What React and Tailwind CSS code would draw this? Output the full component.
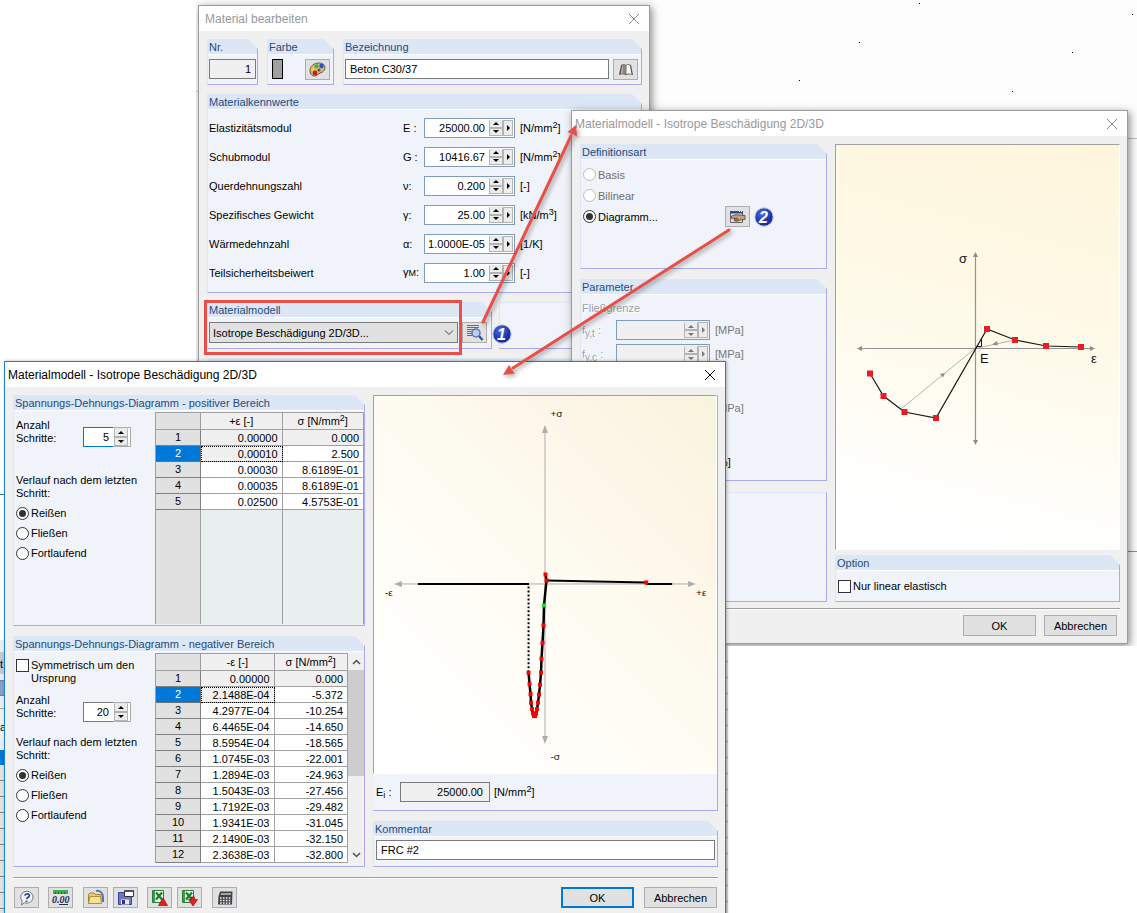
import React, { useId, useState } from "react";

const positiveRows = [
  ["0.00000", "0.000"],
  ["0.00010", "2.500"],
  ["0.00030", "8.6189E-01"],
  ["0.00035", "8.6189E-01"],
  ["0.02500", "4.5753E-01"],
];

const negativeRows = [
  ["0.00000", "0.000"],
  ["2.1488E-04", "-5.372"],
  ["4.2977E-04", "-10.254"],
  ["6.4465E-04", "-14.650"],
  ["8.5954E-04", "-18.565"],
  ["1.0745E-03", "-22.001"],
  ["1.2894E-03", "-24.963"],
  ["1.5043E-03", "-27.456"],
  ["1.7192E-03", "-29.482"],
  ["1.9341E-03", "-31.045"],
  ["2.1490E-03", "-32.150"],
  ["2.3638E-03", "-32.800"],
];

const Unit = ({ children, sup }) => (
  <span className="whitespace-nowrap">
    [{children}
    {sup && <sup className="text-[9px] leading-none -top-1">{sup}</sup>}]
  </span>
);

const materialValues = [
  { label: "Elastizitätsmodul", symbol: "E :", value: "25000.00", unit: <Unit sup="2">N/mm</Unit> },
  { label: "Schubmodul", symbol: "G :", value: "10416.67", unit: <Unit sup="2">N/mm</Unit> },
  { label: "Querdehnungszahl", symbol: "ν:", value: "0.200", unit: <Unit>-</Unit> },
  { label: "Spezifisches Gewicht", symbol: "γ:", value: "25.00", unit: <Unit sup="3">kN/m</Unit> },
  { label: "Wärmedehnzahl", symbol: "α:", value: "1.0000E-05", unit: <Unit>1/K</Unit> },
  {
    label: "Teilsicherheitsbeiwert",
    symbol: (
      <>
        γ<span className="text-[9px]">M</span>:
      </>
    ),
    value: "1.00",
    unit: <Unit>-</Unit>,
  },
];

const Window = ({ title, active, className, children }) => (
  <section
    className={
      "absolute flex flex-col border bg-[#f0f0f0] " +
      (active
        ? "border-[#1883d7] shadow-[1px_0_3px_rgba(0,0,0,0.3)] "
        : "border-[#9c9c9c] shadow-[2px_2px_8px_rgba(0,0,0,0.45)] ") +
      className
    }
  >
    <header className="flex h-[25px] shrink-0 items-center justify-between bg-white pl-[3px] pr-2">
      <h2 className={"text-xs whitespace-nowrap " + (active ? "text-black" : "text-[#999]")}>
        {title}
      </h2>
      <button type="button" aria-label="Schließen" className="p-px">
        <svg width="12" height="12" viewBox="0 0 12 12">
          <path d="M1 1 11 11M11 1 1 11" stroke={active ? "#000" : "#888"} fill="none" />
        </svg>
      </button>
    </header>
    {children}
  </section>
);

const Group = ({ title, className = "", children }) => (
  <section
    className={
      "flex min-w-0 flex-col border-l border-r border-b border-l-[#dce6f5] border-r-[#aaa9ec] border-b-[#aaa9ec] bg-[#f0f4fa] " +
      (title
        ? "[clip-path:polygon(0_0,calc(100%_-_10px)_0,100%_10px,100%_100%,0_100%)] "
        : "border-t border-t-[#dce6f5] ") +
      className
    }
  >
    {title && (
      <h3 className="h-4 shrink-0 border-b border-white bg-[#dce6f5] pl-px leading-[17px] text-[#1d4b7c] whitespace-nowrap">
        {title}
      </h3>
    )}
    {children}
  </section>
);

const Arrow = ({ dir }) => (
  <svg width="6" height="3" viewBox="0 0 6 3" className="block">
    <path d={dir === "up" ? "M0 3 3 0 6 3z" : "M0 0 3 3 6 0z"} fill="currentColor" />
  </svg>
);

const SpinButtons = () => (
  <span className="flex w-[14px] shrink-0 flex-col">
    <button
      type="button"
      aria-label="Mehr"
      className="flex flex-1 items-center justify-center border border-[#b4b4b4] border-t-[#e8e8e8] bg-[#ececec]"
    >
      <Arrow dir="up" />
    </button>
    <button
      type="button"
      aria-label="Weniger"
      className="flex flex-1 items-center justify-center border border-[#b4b4b4] bg-[#ececec]"
    >
      <Arrow dir="down" />
    </button>
  </span>
);

const ValueField = ({ id, value, disabled, className = "" }) => (
  <div
    className={
      "flex h-5 border border-[#7f9db9] p-px " +
      (disabled ? "bg-[#f0f0f0] text-[#777] " : "bg-white ") +
      className
    }
  >
    <input
      id={id}
      defaultValue={value}
      disabled={disabled}
      className="min-w-0 flex-1 bg-transparent pr-1 text-right outline-none"
    />
    <SpinButtons />
    <button
      type="button"
      aria-label="Auswahl"
      className="flex w-[10px] shrink-0 items-center justify-center border border-[#b4b4b4] bg-[#ececec]"
    >
      <svg width="3" height="6" viewBox="0 0 3 6">
        <path d="M0 0 3 3 0 6z" fill="currentColor" />
      </svg>
    </button>
  </div>
);

const IconButton = ({ label, className = "", children }) => (
  <button
    type="button"
    aria-label={label}
    className={
      "flex h-[21px] w-[25px] shrink-0 items-center justify-center border border-[#adadad] bg-[#e1e1e1] " +
      className
    }
  >
    {children}
  </button>
);

const PushButton = ({ primary, children }) => (
  <button
    type="button"
    className={
      "h-[21px] w-[73px] bg-[#e1e1e1] " +
      (primary ? "border-2 border-[#0078d7]" : "border border-[#adadad]")
    }
  >
    {children}
  </button>
);

const Radio = ({ name, label, checked, disabled, onChange }) => (
  <label className={"flex items-center gap-0.5 " + (disabled ? "text-[#6d6d6d]" : "")}>
    <span className="grid">
      <input
        type="radio"
        name={name}
        checked={checked}
        disabled={disabled}
        onChange={onChange}
        className="peer col-start-1 row-start-1 size-[13px] appearance-none rounded-full border border-[#333] bg-white disabled:border-[#bcbcbc]"
      />
      <span className="pointer-events-none col-start-1 row-start-1 hidden size-[7px] place-self-center rounded-full bg-[#333] peer-checked:block" />
    </span>
    {label}
  </label>
);

const Badge = ({ n }) => (
  <svg width="20" height="20" viewBox="0 0 20 20" className="shrink-0">
    <defs>
      <radialGradient id={"badge" + n} cx="0.4" cy="0.3" r="0.8">
        <stop offset="0" stopColor="#4a6fe0" />
        <stop offset="0.6" stopColor="#1c35ad" />
        <stop offset="1" stopColor="#14258a" />
      </radialGradient>
    </defs>
    <circle cx="10" cy="10" r="9.2" fill={"url(#badge" + n + ")"} stroke="#c6cbe2" />
    <text
      x="9.5"
      y="15.5"
      textAnchor="middle"
      fill="#fff"
      fontSize="16"
      fontWeight="bold"
      fontStyle="italic"
      fontFamily="Liberation Sans, sans-serif"
    >
      {n}
    </text>
  </svg>
);

/* icons */

const PaletteIcon = () => (
  <svg width="17" height="15" viewBox="0 0 17 15">
    <path
      d="M1 9C1 4 5 1 10 1c4 0 6 2 6 4.500 0 3-2 4.500-4.500 5.500S9 13 6 14C3 14 1 12 1 9z"
      fill="#cdb592"
      stroke="#6f5a44"
    />
    <circle cx="4" cy="7.500" r="2" fill="#efd51f" />
    <circle cx="7.500" cy="4.200" r="2" fill="#3cba2e" />
    <circle cx="12.500" cy="4" r="2.200" fill="#2a48d8" />
    <circle cx="6" cy="11" r="2.400" fill="#d11c1c" />
    <circle cx="10" cy="8" r="1.500" fill="#7d4a25" />
  </svg>
);

const BookIcon = () => (
  <svg width="16" height="14" viewBox="0 0 16 14">
    <path d="M1 12 3 2c2-1 4-1 5 0 1-1 3-1 5 0l2 10c-2-1-5-1-7 0-2-1-5-1-7 0z" fill="#4a4a52" />
    <path d="M2.500 11 4 2.500c1.500-.6 3-.6 3.600 0V11c-1.600-.8-3.500-.8-5.100 0z" fill="#b3a996" />
    <path d="M13.500 11 12 2.500c-1.500-.6-3-.6-3.600 0V11c1.600-.8 3.500-.8 5.100 0z" fill="#faf9f4" />
    <path d="M6 2v8.500" stroke="#6c6458" />
  </svg>
);

const DetailsIcon = () => (
  <svg width="18" height="17" viewBox="0 0 18 17">
    <path d="M1 1.500h12M1 3.500h12M1 5.500h7M1 7.500h5M1 9.500h5M1 11.500h6" stroke="#6a6a6a" />
    <circle cx="10" cy="9" r="4" fill="#b9cdf2" stroke="#5d76ad" strokeWidth="1.500" />
    <path d="m13 12 3.500 4" stroke="#3a57a5" strokeWidth="2.500" />
  </svg>
);

const EditIcon = () => (
  <svg width="17" height="14" viewBox="0 0 17 14">
    <path d="M1.500 1.500h12v11h-12z" fill="#d9dee8" stroke="#666" />
    <path d="M1 1h13v2.500H1z" fill="#2b4c94" />
    <path d="M10 1.500h1M12 1.500h1" stroke="#fff" />
    <path
      d="M2 6.500C4 5 8 4.500 10 5l6 .5v4l-5 .5c-2 1.500-4 1.500-6 .5l1-2-4-.5z"
      fill="#c9a080"
      stroke="#54402f"
      strokeWidth="0.800"
    />
    <path d="M5 8.500 9 8M6 10l4-.5" stroke="#54402f" strokeWidth="0.800" />
  </svg>
);

const HelpIcon = () => (
  <svg width="16" height="16" viewBox="0 0 16 16">
    <path d="M8 1.200a6.300 6 0 1 1-2.500 11.600L2.500 15l.6-4A6.200 6 0 0 1 8 1.200z" fill="#f2f5fa" stroke="#777" />
    <path d="M5.800 5.600C6.200 3.400 10.500 3.200 10.300 5.600 10.200 7.300 8 7.300 7.800 9.200M7.500 10.600v1.500" fill="none" stroke="#2b4a9a" strokeWidth="1.800" />
  </svg>
);

const UnitsIcon = () => (
  <svg width="19" height="17" viewBox="0 0 19 17">
    <path d="M2 1h15v4H2z" fill="#3fae4f" />
    <path d="M4.500 3v2M7.500 3v2M10.500 3v2M13.500 3v2" stroke="#17702a" />
    <text x="1" y="14" fontSize="10" fontStyle="italic" fontWeight="bold" fontFamily="Liberation Serif, serif" fill="#222c55">
      0.00
    </text>
    <path d="M8 15.500h9" stroke="#222c55" />
  </svg>
);

const FolderIcon = () => (
  <svg width="18" height="17" viewBox="0 0 18 17">
    <path d="M9 2c4-1 7 2 7 6v5" fill="none" stroke="#4f79b0" strokeWidth="2" />
    <path d="M1.500 5.500 3 4h4l1 1.500h6v9h-12.500z" fill="#e8cf76" stroke="#a3812b" />
    <path d="M1.500 14.500 3 7.500h10.500l1 7z" fill="#f7e08e" stroke="#b08f38" />
  </svg>
);

const SaveIcon = () => (
  <svg width="18" height="17" viewBox="0 0 18 17">
    <path d="M1.500 3.500h13v12h-13z" fill="#6d76c9" stroke="#3a4293" />
    <path d="M4 10.500h8v5H4z" fill="#e6e8f4" />
    <path d="M5 11h3v4H5z" fill="#30387c" />
    <path d="M7.500 1.500h9v6h-9z" fill="#fff" stroke="#333" />
    <path d="M7 1h10v2H7z" fill="#46526e" />
  </svg>
);

const ExcelIcon = ({ up }) => (
  <svg width="18" height="18" viewBox="0 0 18 18">
    <path d="M1.500 1.500h11v12h-11z" fill="#e4f1e2" stroke="#2a7d3c" />
    <path d="M2 2h2v11H2z" fill="#3b9950" />
    <path d="m5 3.500 6 7M11 3.500l-6 7" stroke="#1f7a35" strokeWidth="2.200" />
    {up ? (
      <path d="m12 9 4.500 7.500h-9z" fill="#e51f1f" stroke="#8e1010" strokeWidth="0.700" />
    ) : (
      <path d="m12 17 4.500-6.500h-3V8h-3v2.500h-3z" fill="#e51f1f" stroke="#8e1010" strokeWidth="0.700" />
    )}
  </svg>
);

const CalculatorIcon = () => (
  <svg width="16" height="14" viewBox="0 0 16 14">
    <path d="M3 .5h12.500l-.5 13H1L1.500 5z" fill="#3d4148" />
    <path d="M4 2h10v2H3.500z" fill="#9aa8a4" />
    <path d="M3 7h11M3 9.500h11M3 12h10.500" stroke="#e8e8e8" strokeWidth="1.300" strokeDasharray="1.700 1.200" />
  </svg>
);

/* diagrams */

const modelPoints = [
  [870, 373.5],
  [883.5, 396],
  [904.5, 412],
  [936, 418],
  [987, 329],
  [1015, 340],
  [1046, 346],
  [1081, 347],
];

const ModelDiagram = () => (
  <svg viewBox="836 145 283 404" className="h-auto w-full" fontFamily="Liberation Sans, sans-serif">
    <g stroke="#929292" fill="#8c8c8c">
      <path d="M860 348.500h231M975.500 256v185" strokeWidth="1.200" />
      <path
        stroke="none"
        d="m857 348.500 5-2.500v5zM1095 348.500l-5-2.500v5zM975.500 252l-2.500 5h5zM975.500 445l-2.500-5h5z"
      />
      <path d="M901 409 975 348.500M1015 340 975 348.500" strokeWidth="0.700" />
      <path stroke="none" d="m945 373-5 1 3 3.500zM992 344.500l5-3.500.8 4.500z" />
    </g>
    <polyline points={modelPoints.join(" ")} fill="none" stroke="#161616" strokeWidth="1.200" />
    <path d="M981.500 339v7.500H976" fill="none" stroke="#161616" />
    {modelPoints.map(([x, y]) => (
      <rect key={x} x={x - 3} y={y - 3} width="6" height="6" fill="#e71d25" />
    ))}
    <g fill="#111" fontSize="13">
      <text x="959" y="263">σ</text>
      <text x="980" y="363">E</text>
      <text x="1091" y="363">ε</text>
    </g>
  </svg>
);

const curvePoints = [
  [546, 575], [547, 581], [544.5, 606], [544, 626], [543, 643.5], [542, 659.5],
  [541.5, 673.5], [540.5, 685.5], [539.5, 695.5], [538.5, 703.5], [537.5, 710],
  [536.5, 714.5], [535.5, 717], [534.5, 717], [533.5, 714.5], [532.5, 710],
  [531.5, 703.5], [531, 695], [530, 685], [529, 673.5],
];

const CurveDiagram = () => (
  <svg viewBox="374 396 343 378" className="h-auto w-full" fontFamily="Liberation Sans, sans-serif">
    <g stroke="#adadad" fill="#adadad">
      <path d="M398 584.500h295M545.500 430v309" />
      <path
        stroke="none"
        d="m394 584.500 8-3v6zM697 584.500l-8-3v6zM545.500 425l-3 8h6zM545.500 745l-3-8h6z"
      />
    </g>
    <path d="M418 584.500h111.500M647 584.500h26M547 581l100 2" stroke="#000" strokeWidth="2" />
    <path d="M529 587v85" stroke="#000" strokeWidth="2" strokeDasharray="2 2" />
    <polyline points={curvePoints.join(" ")} fill="none" stroke="#000" strokeWidth="2.500" />
    {curvePoints.map(([x, y], i) => (
      <rect key={i} x={x - 2} y={y - 2} width="4" height="4" fill={i === 2 ? "#1fdc1f" : "#f00"} />
    ))}
    <rect x="645" y="581" width="4" height="4" fill="#f00" />
    <g fill="#111" fontSize="10">
      <text x="551" y="417">+σ</text>
      <text x="551" y="761">-σ</text>
      <text x="385" y="597">-ε</text>
      <text x="697" y="597">+ε</text>
    </g>
  </svg>
);

const Canvas = ({ className, children }) => (
  <div className={"border border-[#a0a0a0] border-r-white border-b-white " + className}>{children}</div>
);

const DataTable = ({ rows, strainLabel, className = "" }) => (
  <table
    className={
      "w-full table-fixed border-separate border-spacing-0 border-l border-[#a0a0a0] bg-[#e9efef] " +
      className
    }
  >
    <thead>
      <tr className="bg-[#f0f0f0]">
        <th className="h-[18px] w-[45px] border-y border-r border-[#a0a0a0] bg-[#e1e1e1] p-0" />
        <th className="border-y border-r border-[#a0a0a0] p-0 font-normal">{strainLabel}</th>
        <th className="border-y border-r border-[#a0a0a0] p-0 font-normal">
          σ <Unit sup="2">N/mm</Unit>
        </th>
      </tr>
    </thead>
    <tbody>
      {rows.map(([strain, stress], i) => (
        <tr key={i} className={i === 0 ? "bg-[#f0f0f0]" : "bg-white"}>
          <th
            className={
              "h-4 border-r border-b p-0 font-normal leading-[15px] " +
              (i === 1
                ? "border-[#6f6f6f] bg-[#0078d7] text-white"
                : "border-[#808080] bg-[#e1e1e1]")
            }
          >
            {i + 1}
          </th>
          <td
            className={
              "border-r border-b border-[#a0a0a0] pb-0 pl-0 pr-1 pt-px text-right leading-[14px] " +
              (i === 1 ? "bg-[#f0f0f0] outline-1 -outline-offset-1 outline-dotted outline-black" : "")
            }
          >
            {strain}
          </td>
          <td className="border-r border-b border-[#a0a0a0] pb-0 pl-0 pr-1 pt-px text-right leading-[14px]">
            {stress}
          </td>
        </tr>
      ))}
      {rows.length < 12 && (
        <tr>
          <td className="border-r border-[#a0a0a0] bg-[#e1e1e1] p-0" />
          <td className="border-r border-[#a0a0a0] p-0" />
          <td className="border-r border-[#a0a0a0] p-0" />
        </tr>
      )}
    </tbody>
  </table>
);

const StepCount = ({ value, focused }) => {
  const id = useId();
  return (
    <div className="flex w-[115px] items-start justify-between">
      <label htmlFor={id} className="leading-[13px]">
        Anzahl
        <br />
        Schritte:
      </label>
      <div className="mt-2 flex h-5 w-12">
        <input
          id={id}
          defaultValue={value}
          className={
            "w-[30px] border border-r-0 bg-white pr-1 text-right outline-none " +
            (focused ? "border-[#0078d7]" : "border-[#7a7a7a]")
          }
        />
        <span className="flex flex-1 border border-l-0 border-[#adadad] bg-white pl-px">
          <SpinButtons />
        </span>
      </div>
    </div>
  );
};

const AfterLastStep = ({ name, className = "" }) => {
  const [selected, setSelected] = useState("Reißen");
  return (
    <div className={className}>
      <p className="leading-[13px]">
        Verlauf nach dem letzten
        <br />
        Schritt:
      </p>
      <div className="mt-[3px] grid auto-rows-[20px] items-center">
        {["Reißen", "Fließen", "Fortlaufend"].map((option) => (
          <Radio
            key={option}
            name={name}
            label={option}
            checked={selected === option}
            onChange={() => setSelected(option)}
          />
        ))}
      </div>
    </div>
  );
};

const CheckBox = ({ children }) => (
  <label className="flex items-start gap-0.5 leading-[13px]">
    <input type="checkbox" className="size-[13px] shrink-0 appearance-none border border-[#333] bg-white checked:bg-[#333]" />
    <span>{children}</span>
  </label>
);

const MaterialWindow = () => (
  <Window
    title="Material bearbeiten"
    className="left-0.5 top-[5px] h-[420px] w-[452px] [&_h2]:pl-[3px]"
  >
    <div className="flex flex-col gap-[9px] pl-2 pr-[7px] pt-2">
      <div className="flex gap-[9px]">
        <Group title="Nr." className="h-[46px] w-[51px]">
          <input
            aria-label="Nr."
            readOnly
            value="1"
            className="mx-px mt-1 h-5 border border-[#7a7a7a] bg-[#f0f0f0] pr-1 text-right"
          />
        </Group>
        <Group title="Farbe" className="h-[46px] w-[67px]">
          <div className="mt-1 flex items-start justify-between pl-1 pr-[3px]">
            <span className="h-5 w-[11px] border border-black bg-[#a0a0a0]" />
            <IconButton label="Farbe wählen">
              <PaletteIcon />
            </IconButton>
          </div>
        </Group>
        <Group title="Bezeichnung" className="h-[46px] flex-1">
          <div className="mt-1 flex items-start gap-1 pl-px pr-[3px]">
            <input
              aria-label="Bezeichnung"
              defaultValue="Beton C30/37"
              className="h-5 min-w-0 flex-1 border border-[#7a7a7a] bg-white px-1 outline-none"
            />
            <IconButton label="Bibliothek">
              <BookIcon />
            </IconButton>
          </div>
        </Group>
      </div>

      <Group title="Materialkennwerte" className="h-[199px]">
        <div className="grid auto-rows-[29px] pt-[3px]">
          {materialValues.map((item) => (
            <div
              key={item.label}
              className="grid grid-cols-[194px_21px_91px_auto] items-center pl-px"
            >
              <label htmlFor={item.label}>{item.label}</label>
              <span className="whitespace-nowrap">{item.symbol}</span>
              <ValueField id={item.label} value={item.value} />
              <span className="pl-[5px]">{item.unit}</span>
            </div>
          ))}
        </div>
      </Group>

      <div className="flex gap-[7px]">
        <div className="relative w-[285px]">
          <Group title="Materialmodell" className="h-[47px]">
            <div className="mt-1 flex items-center justify-between pl-px pr-1">
              <div className="grid w-[249px] items-center">
                <select
                  aria-label="Materialmodell"
                  className="col-start-1 row-start-1 h-[21px] appearance-none border border-[#7a7a7a] bg-[#e1e1e1] pl-[3px]"
                >
                  <option>Isotrope Beschädigung 2D/3D...</option>
                </select>
                <svg
                  width="10"
                  height="6"
                  viewBox="0 0 10 6"
                  className="pointer-events-none col-start-1 row-start-1 mr-1 justify-self-end"
                >
                  <path d="m1 .5 4 4 4-4" fill="none" stroke="#444" />
                </svg>
              </div>
              <IconButton label="Materialmodell bearbeiten">
                <DetailsIcon />
              </IconButton>
            </div>
          </Group>
          <div className="pointer-events-none absolute -left-[3px] -top-0.5 h-[55px] w-[258px] border-3 border-[#ea4e48]" />
          <span className="absolute -right-5 top-[22px]">
            <Badge n="1" />
          </span>
        </div>
        <Group className="h-[47px] flex-1" />
      </div>
      <div className="h-12 bg-[#dce6f5]" />
    </div>
  </Window>
);

const StrengthRow = ({ sub, disabled = true, unit = "MPa" }) => {
  const id = useId();
  return (
    <div
      className={
        "grid h-6 grid-cols-[34px_94px_auto] items-center " + (disabled ? "text-[#777]" : "")
      }
    >
      <label htmlFor={id} className="text-[#a0a0a0] [text-shadow:1px_1px_0_#fff]">
        f<sub className="text-[10px]">{sub}</sub> :
      </label>
      <ValueField id={id} value="" disabled={disabled} />
      <span className="pl-[5px]">
        <Unit>{unit}</Unit>
      </span>
    </div>
  );
};

const ModelWindow = () => {
  const [definition, setDefinition] = useState("Diagramm...");
  return (
    <Window
      title="Materialmodell - Isotrope Beschädigung 2D/3D"
      className="left-[375px] top-[110px] h-[534px] w-[557px]"
    >
      <div className="grid grid-cols-[247px_1fr] gap-x-2 pl-2 pr-[7px] pt-2">
        <div className="flex flex-col">
          <Group title="Definitionsart" className="h-[125px]">
            <div className="mt-1 grid auto-rows-[21px] items-center pl-0.5">
              <Radio name="definition" label="Basis" disabled checked={false} onChange={() => {}} />
              <Radio name="definition" label="Bilinear" disabled checked={false} onChange={() => {}} />
              <div className="flex items-center">
                <div className="w-[142px]">
                  <Radio
                    name="definition"
                    label="Diagramm..."
                    checked={definition === "Diagramm..."}
                    onChange={() => setDefinition("Diagramm...")}
                  />
                </div>
                <IconButton label="Diagramm bearbeiten" className="mr-1">
                  <EditIcon />
                </IconButton>
                <Badge n="2" />
              </div>
            </div>
          </Group>
          <Group title="Parameter" className="mt-2.5 h-[202px]">
            <div className="pl-px pt-[7px]">
              <p className="mb-[3px] leading-[13px] text-[#a0a0a0] [text-shadow:1px_1px_0_#fff]">
                Fließgrenze
              </p>
              <StrengthRow sub="y,t" />
              <StrengthRow sub="y,c" />
              <div className="mt-[30px]">
                <StrengthRow sub="u" />
              </div>
              <div className="mt-[30px]">
                <StrengthRow sub="r" unit="%" disabled={false} />
              </div>
            </div>
          </Group>
          <Group className="mt-[11px] h-[110px]" />
        </div>
        <div className="flex flex-col gap-[5px]">
          <Canvas className="bg-[linear-gradient(195deg,#fef5dc,#fefae9_45%,#ffffff_90%)]">
            <ModelDiagram />
          </Canvas>
          <Group title="Option" className="h-[47px]">
            <div className="pl-0.5 pt-[9px]">
              <CheckBox>Nur linear elastisch</CheckBox>
            </div>
          </Group>
        </div>
      </div>
      <hr className="ml-2 mr-[7px] mt-1.5 border-t border-b border-t-[#a0a0a0] border-b-white" />
      <footer className="flex justify-end gap-2 px-2.5 pt-[5px]">
        <PushButton>OK</PushButton>
        <PushButton>Abbrechen</PushButton>
      </footer>
    </Window>
  );
};

const DiagramWindow = () => {
  const youngId = useId();
  return (
    <Window
      active
      title="Materialmodell - Isotrope Beschädigung 2D/3D"
      className="left-1 top-[361px] h-[556px] w-[722px]"
    >
      <div className="grid grid-cols-[352px_1fr] gap-x-2 pl-2 pr-[7px] pt-2">
        <div className="flex flex-col gap-2.5">
          <Group title="Spannungs-Dehnungs-Diagramm - positiver Bereich" className="h-[231px]">
            <div className="flex pt-px">
              <div className="w-[141px] shrink-0 pl-0.5 pt-[7px]">
                <StepCount value="5" focused />
                <AfterLastStep name="positive" className="mt-[27px]" />
              </div>
              <div className="min-w-0 flex-1">
                <DataTable rows={positiveRows} strainLabel="+ε [-]" className="h-[212px]" />
              </div>
            </div>
          </Group>
          <Group title="Spannungs-Dehnungs-Diagramm - negativer Bereich" className="h-[231px]">
            <div className="flex pt-px">
              <div className="w-[141px] shrink-0 pl-0.5 pt-1.5">
                <CheckBox>
                  Symmetrisch um den
                  <br />
                  Ursprung
                </CheckBox>
                <div className="mt-[9px]">
                  <StepCount value="20" />
                </div>
                <AfterLastStep name="negative" className="mt-3.5" />
              </div>
              <div className="min-w-0 flex-1">
                <DataTable rows={negativeRows} strainLabel="-ε [-]" />
              </div>
              <div className="flex w-4 flex-col bg-[#f0f0f0]">
                <button type="button" aria-label="Nach oben" className="flex h-[17px] items-center justify-center">
                  <svg width="9" height="6" viewBox="0 0 9 6">
                    <path d="m1 5 3.500-3.500L8 5" fill="none" stroke="#505050" strokeWidth="1.500" />
                  </svg>
                </button>
                <div className="h-[106px] bg-[#cdcdcd]" />
                <button type="button" aria-label="Nach unten" className="mt-auto flex h-[17px] items-center justify-center">
                  <svg width="9" height="6" viewBox="0 0 9 6">
                    <path d="m1 1 3.500 3.500L8 1" fill="none" stroke="#505050" strokeWidth="1.500" />
                  </svg>
                </button>
              </div>
            </div>
          </Group>
        </div>

        <div className="flex flex-col gap-2.5">
          <Group className="h-[416px] border-l-0 border-t-0">
            <Canvas className="bg-[linear-gradient(45deg,#ffffff_10%,#fefcf2_50%,#fdf5e6_80%,#f7f4dd)]">
              <CurveDiagram />
            </Canvas>
            <div className="flex flex-1 items-center pl-[3px]">
              <label htmlFor={youngId} className="w-6">
                E<sub className="text-[9px]">i</sub> :
              </label>
              <input
                id={youngId}
                readOnly
                value="25000.00"
                className="mr-1 h-5 w-[90px] border border-[#7a7a7a] bg-[#f0f0f0] pr-1.5 text-right"
              />
              <Unit sup="2">N/mm</Unit>
            </div>
          </Group>
          <Group title="Kommentar" className="h-[46px]">
            <input
              aria-label="Kommentar"
              defaultValue="FRC #2"
              className="mx-0.5 mt-[3px] h-5 border border-[#7a7a7a] bg-white px-1 outline-none"
            />
          </Group>
        </div>
      </div>
      <hr className="ml-2 mr-[7px] mt-2.5 border-t border-b border-t-[#a0a0a0] border-b-white" />
      <footer className="flex items-center px-2 pt-2">
        <div className="flex gap-[5px] pl-px">
          <IconButton label="Hilfe" className="mr-1">
            <HelpIcon />
          </IconButton>
          <IconButton label="Einheiten" className="mr-[5px]">
            <UnitsIcon />
          </IconButton>
          <IconButton label="Öffnen">
            <FolderIcon />
          </IconButton>
          <IconButton label="Speichern" className="mr-1">
            <SaveIcon />
          </IconButton>
          <IconButton label="Excel-Export">
            <ExcelIcon up />
          </IconButton>
          <IconButton label="Excel-Import" className="mr-[5px]">
            <ExcelIcon />
          </IconButton>
          <IconButton label="Rechner">
            <CalculatorIcon />
          </IconButton>
        </div>
        <div className="ml-auto flex gap-2.5">
          <PushButton primary>OK</PushButton>
          <PushButton>Abbrechen</PushButton>
        </div>
      </footer>
    </Window>
  );
};

// mesh nodes visible in the work area behind the dialogs
const Nodes = () => (
  <svg width="941" height="110" viewBox="196 0 941 110" className="absolute left-0 top-0">
    <path
      d="M919 3h1v1h-1zM1132 14h1v1h-1zM859 42h1v1h-1zM1072 52h1v1h-1zM799 80h1v1h-1zM1012 91h1v1h-1z"
      fill="#000"
    />
  </svg>
);

const Callouts = () => (
  <svg
    width="1137"
    height="913"
    viewBox="0 0 1137 913"
    className="pointer-events-none absolute left-0 top-0 drop-shadow-[2px_2px_2px_rgba(0,0,0,0.35)]"
  >
    <g stroke="#ea4e48" strokeWidth="3" fill="#ea4e48" strokeLinecap="round">
      <path d="M483 322 571 136M729 230 513 368" />
      <path stroke="none" d="m576 125 1 11.500-9.500-4.500zM503 375l6-10 5.500 8.500z" />
    </g>
  </svg>
);

const App = () => {
  return (
    <main className="relative min-h-screen overflow-hidden bg-white font-['Liberation_Sans',Arial,sans-serif] text-[11px] leading-4 text-black">
      <div className="absolute left-[196px] right-0 top-0 h-[646px] overflow-hidden bg-[#fdfdfd]">
        <Nodes />
        <div className="absolute left-0 top-[91px] h-px w-0.5 bg-[#c4c4c4]" />
        <div className="absolute right-0 top-[138px] h-px w-2.5 bg-[#c4c4c4]" />
        <div className="absolute right-0 top-[551px] h-px w-2.5 bg-[#5aa3a0]" />
        <MaterialWindow />
        <ModelWindow />
      </div>

      {/* edge of the main window to the left and right of the front dialog */}
      <div className="absolute left-0 top-[494px] h-px w-1 bg-[#2a8088]" />
      <div className="absolute left-0 top-[640px] flex h-[273px] w-1 flex-col overflow-hidden bg-[#e9edf2]">
        <div className="mt-3 h-[22px] bg-[#bfc9d6] pt-1">t</div>
        <div className="mt-1.5 h-4 border-y border-[#6a7ba5] bg-[#8d9dc4]" />
        <div className="mt-3 h-8 border-t border-[#a0a0a0] bg-[#f0f0f0] pt-2.5">a</div>
        <div className="mt-2.5 h-[15px] shrink-0 bg-[#0078d7]" />
        <div className="flex-1 bg-[repeating-linear-gradient(#e1e1e1_0_15px,#808080_15px_16px)]" />
      </div>
      <div className="absolute left-[726px] top-[646px] h-[267px] w-0.5 bg-[repeating-linear-gradient(#d8d8d8_0_15px,#a0a0a0_15px_16px)]" />

      <DiagramWindow />
      <Callouts />
    </main>
  );
};

export default App;
